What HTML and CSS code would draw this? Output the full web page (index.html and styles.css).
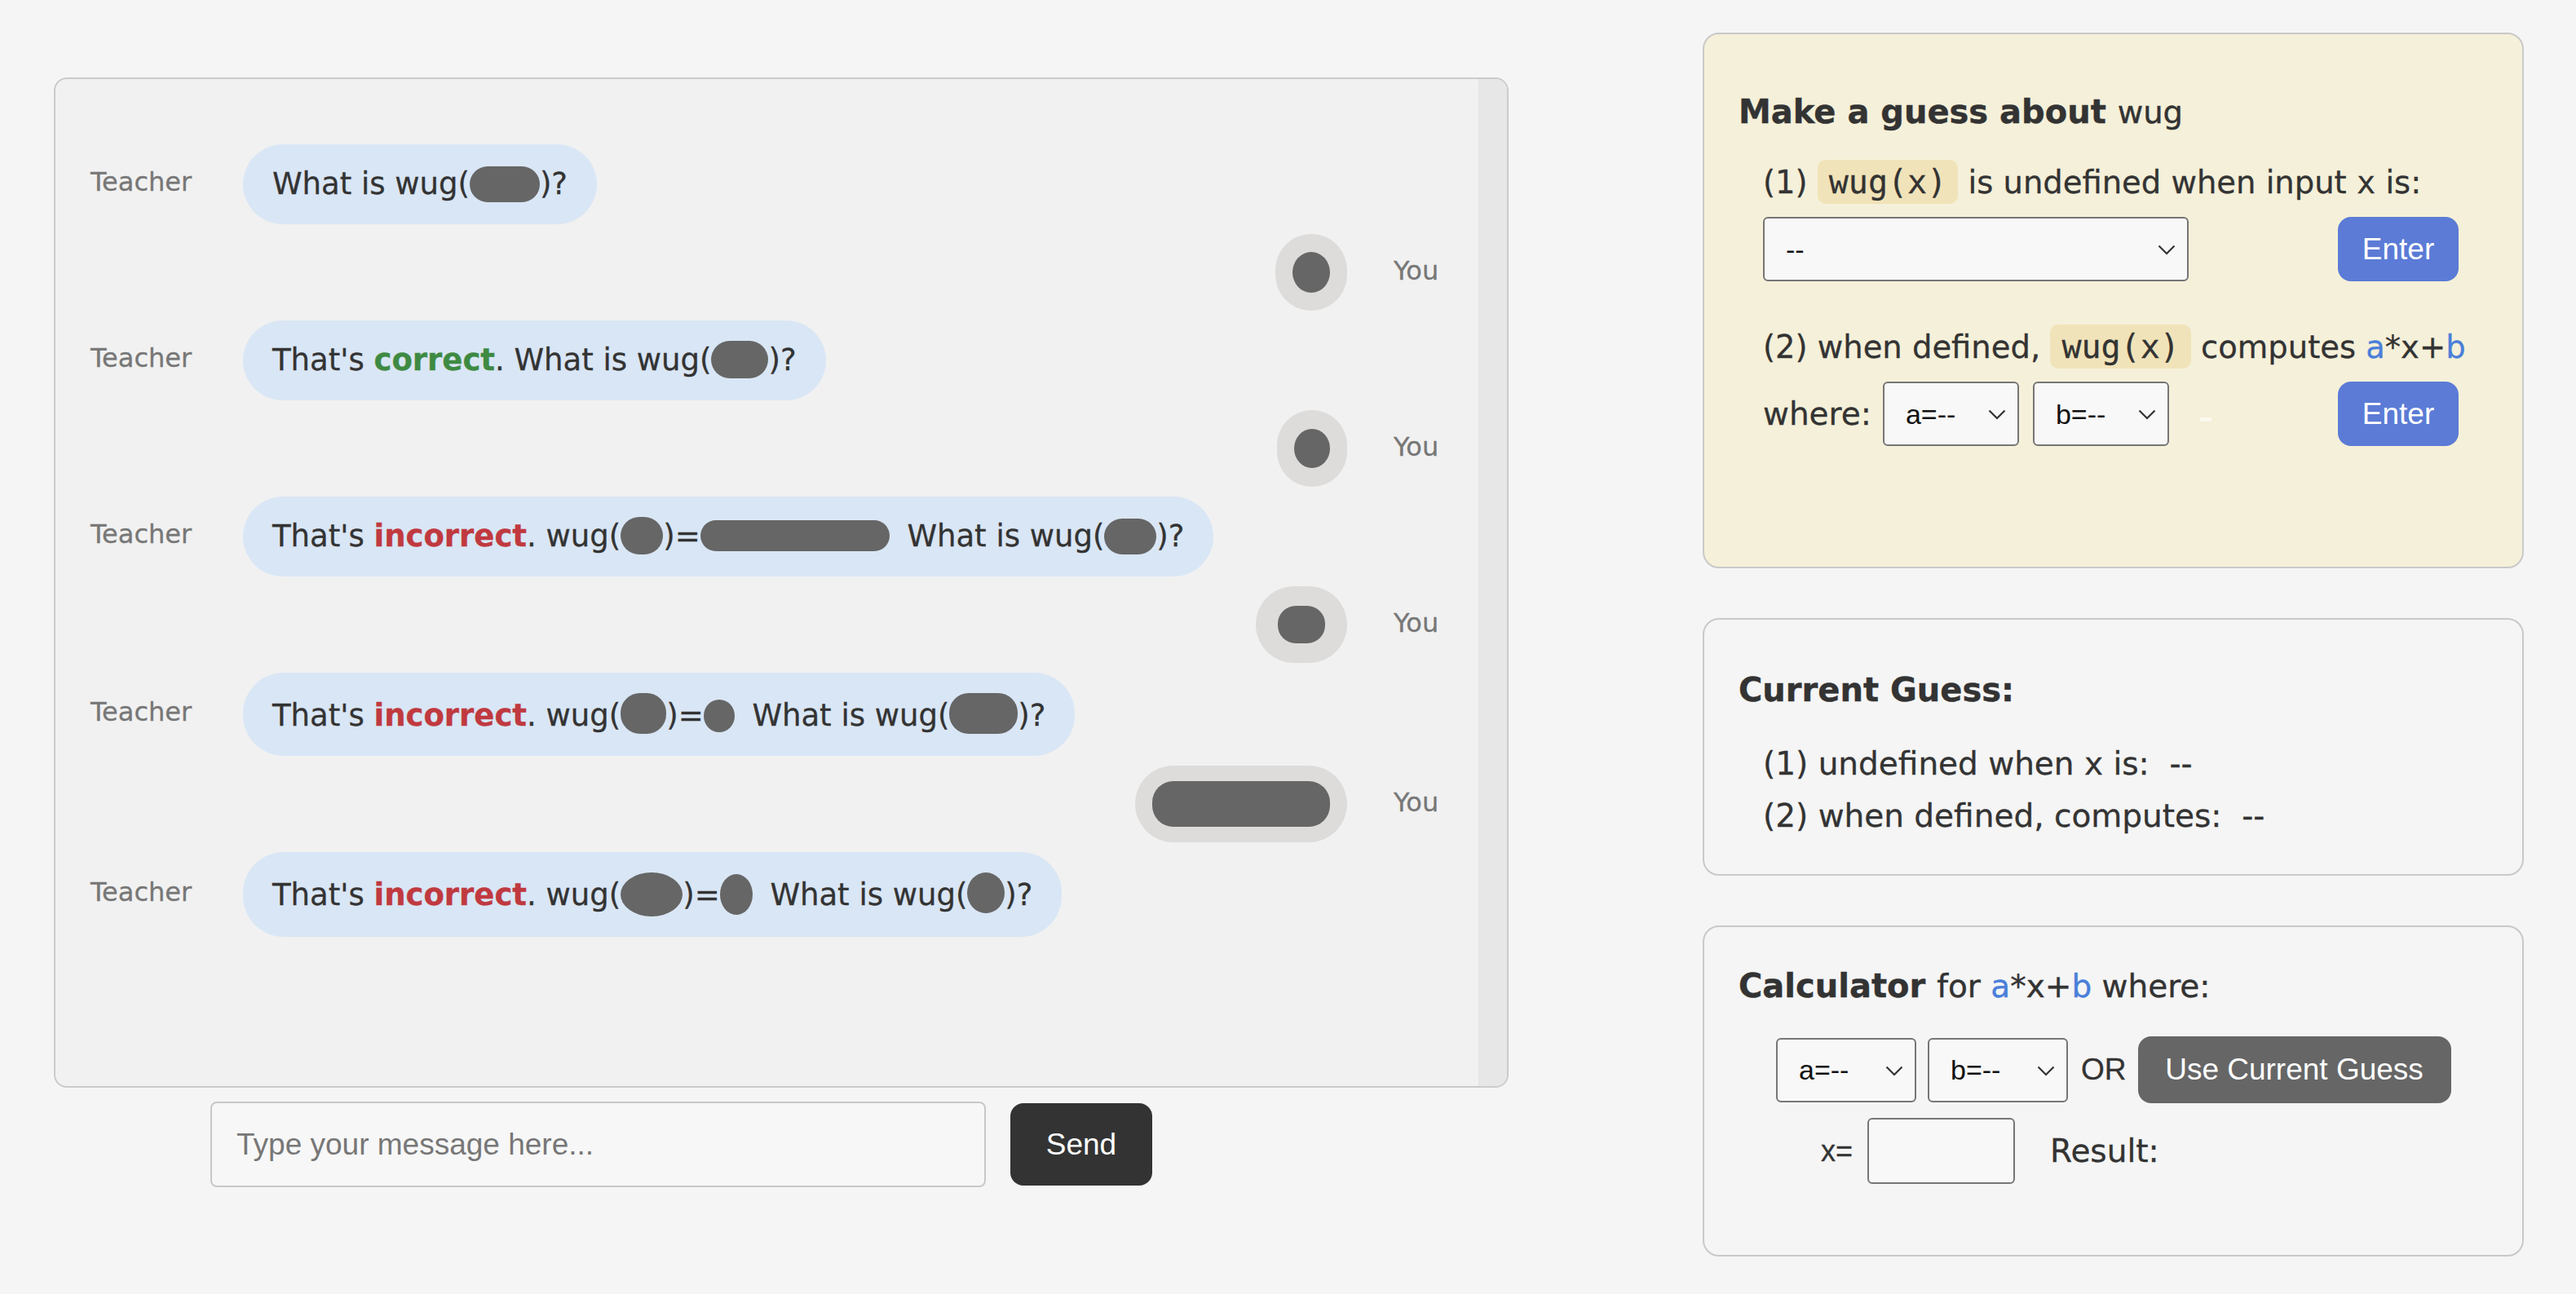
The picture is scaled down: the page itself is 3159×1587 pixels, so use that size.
FILE: index.html
```html
<!DOCTYPE html>
<html>
<head>
<meta charset="utf-8">
<title>wug</title>
<link rel="stylesheet" href="styles.css">
</head>
<body>
<div class="app">
  <div class="chat-col">
    <div class="chat-box">
      <div class="messages">
        <div class="row teacher">
          <div class="who">Teacher</div>
          <div class="bubble">What is wug(<span class="blob w86"></span>)?</div>
        </div>
        <div class="row you">
          <div class="bubble"><span class="blob y46"></span></div>
          <div class="who">You</div>
        </div>
        <div class="row teacher">
          <div class="who">Teacher</div>
          <div class="bubble">That's <b class="ok">correct</b>. What is wug(<span class="blob w70"></span>)?</div>
        </div>
        <div class="row you">
          <div class="bubble"><span class="blob y44"></span></div>
          <div class="who">You</div>
        </div>
        <div class="row teacher">
          <div class="who">Teacher</div>
          <div class="bubble">That's <b class="bad">incorrect</b>. wug(<span class="blob w52"></span>)=<span class="blob w232 val"></span> What is wug(<span class="blob w64"></span>)?</div>
        </div>
        <div class="row you">
          <div class="bubble"><span class="blob y58"></span></div>
          <div class="who">You</div>
        </div>
        <div class="row teacher">
          <div class="who">Teacher</div>
          <div class="bubble">That's <b class="bad">incorrect</b>. wug(<span class="blob w56"></span>)=<span class="blob w38 val"></span> What is wug(<span class="blob w84"></span>)?</div>
        </div>
        <div class="row you">
          <div class="bubble"><span class="blob y218"></span></div>
          <div class="who">You</div>
        </div>
        <div class="row teacher">
          <div class="who">Teacher</div>
          <div class="bubble">That's <b class="bad">incorrect</b>. wug(<span class="blob w76"></span>)=<span class="blob w40 val"></span> What is wug(<span class="blob w46"></span>)?</div>
        </div>
      </div>
      <div class="track"></div>
    </div>
    <div class="composer">
      <input class="msg" type="text" placeholder="Type your message here...">
      <button class="send">Send</button>
    </div>
  </div>

  <div class="side">
    <div class="panel guess">
      <div class="h">Make a guess about <span class="n">wug</span></div>
      <div class="q q1">(1) <span class="code">wug(x)</span> is undefined when input <span class="mx">x</span> is:</div>
      <div class="ctrl">
        <span class="sel big"><select><option>--</option></select><svg class="chev" viewBox="0 0 22 13"><path d="M1.5 1.5 L11 11 L20.5 1.5" fill="none" stroke="#333" stroke-width="2.2"/></svg></span>
        <button class="enter">Enter</button>
      </div>
      <div class="q q2">(2) when defined, <span class="code">wug(x)</span> computes <span class="blue">a</span>*x+<span class="blue">b</span></div>
      <div class="ctrl">
        <span class="where">where:</span>
        <span class="sel small"><select><option>a=--</option></select><svg class="chev" viewBox="0 0 22 13"><path d="M1.5 1.5 L11 11 L20.5 1.5" fill="none" stroke="#333" stroke-width="2.2"/></svg></span>
        <span class="sel small"><select><option>b=--</option></select><svg class="chev" viewBox="0 0 22 13"><path d="M1.5 1.5 L11 11 L20.5 1.5" fill="none" stroke="#333" stroke-width="2.2"/></svg></span>
        <span class="dash"></span>
        <button class="enter">Enter</button>
      </div>
    </div>

    <div class="panel current">
      <div class="h">Current Guess:</div>
      <div class="cg first">(1) undefined when x is:&nbsp; --</div>
      <div class="cg">(2) when defined, computes:&nbsp; --</div>
    </div>

    <div class="panel calc">
      <div class="h">Calculator <span class="n">for <span class="blue">a</span>*x+<span class="blue">b</span> where:</span></div>
      <div class="crow1">
        <span class="sel calc-sel"><select><option>a=--</option></select><svg class="chev" viewBox="0 0 22 13"><path d="M1.5 1.5 L11 11 L20.5 1.5" fill="none" stroke="#333" stroke-width="2.2"/></svg></span>
        <span class="sel calc-sel"><select><option>b=--</option></select><svg class="chev" viewBox="0 0 22 13"><path d="M1.5 1.5 L11 11 L20.5 1.5" fill="none" stroke="#333" stroke-width="2.2"/></svg></span>
        <span class="or">OR</span>
        <button class="use">Use Current Guess</button>
      </div>
      <div class="crow2">
        <span class="xeq">x=</span>
        <input class="xin" type="text">
        <span class="result">Result:</span>
      </div>
    </div>
  </div>
</div>
</body>
</html>
```
FILE: styles.css
```css
* { box-sizing: border-box; }
html, body { margin: 0; padding: 0; }
body {
  background: #f5f5f5;
  font-family: "DejaVu Sans", "Noto Sans", sans-serif;
  color: #333;
}
.app {
  display: flex;
  align-items: flex-start;
  padding: 40px 0 0 66px;
}

/* ---------- chat ---------- */
.chat-col { width: 1784px; margin-top: 55px; }
.chat-box {
  height: 1239px;
  border: 2px solid #cbcbcb;
  border-radius: 16px;
  background: #f1f1f1;
  display: flex;
  overflow: hidden;
}
.messages {
  flex: 1;
  padding: 80px 0 0 43px;
  display: flex;
  flex-direction: column;
  gap: 12px;
}
.track {
  width: 35px;
  background: #e7e7e7;
  border-left: 1px solid #e2e2e2;
}
.row { display: flex; align-items: center; }
.row.you { justify-content: flex-end; }
.who {
  font-size: 32px;
  color: #777;
  line-height: 40px;
  -webkit-text-stroke: 0.3px #777;
}
.teacher .who { flex: 0 0 187px; margin-top: -6px; }
.you .who { flex: 0 0 161px; padding-left: 57px; margin-top: -4px; }
.bubble {
  font-size: 37px;
  line-height: 48px;
  padding: 25px 36px;
  border-radius: 50px;
  background: #d9e6f5;
  white-space: nowrap;
  -webkit-text-stroke: 0.3px currentColor;
}
.you .bubble {
  background: #dddcdb;
  padding: 23px 21px;
  display: flex;
  align-items: center;
  height: 94px;
}
.ok { color: #3e8a42; }
.bad { color: #c0393f; }
.blob {
  display: inline-block;
  background: #666;
  border-radius: 24px;
  height: 44px;
  vertical-align: -10px;
}
.val { margin-right: 10px; }
.w86 { width: 86px; }
.w70 { width: 70px; height: 46px; }
.w64 { width: 64px; }
.w52 { width: 52px; height: 46px; }
.w232 { width: 232px; height: 38px; border-radius: 20px; vertical-align: -6px; }
.w56 { width: 56px; height: 50px; }
.w38 { width: 38px; height: 40px; border-radius: 50%; vertical-align: -8px; }
.w84 { width: 84px; height: 50px; }
.w76 { width: 76px; height: 54px; border-radius: 50%; vertical-align: -14px; }
.w40 { width: 40px; height: 50px; border-radius: 50%; vertical-align: -12px; }
.w46 { width: 46px; height: 50px; border-radius: 50%; }
.y46 { width: 46px; height: 50px; border-radius: 50%; }
.y44 { width: 44px; height: 48px; border-radius: 50%; }
.y58 { width: 58px; height: 46px; border-radius: 22px; margin: 0 6px; }
.y218 { width: 218px; height: 56px; border-radius: 26px; }

.composer {
  display: flex;
  align-items: center;
  gap: 30px;
  margin: 17px 0 0 192px;
}
.msg {
  width: 951px;
  height: 105px;
  border: 2px solid #c8c8c8;
  border-radius: 8px;
  background: #f7f7f7;
  font-family: "Liberation Sans", Arial, sans-serif;
  font-size: 37px;
  padding: 0 30px;
  color: #333;
}
.msg::placeholder { color: #777; }
.send {
  width: 174px;
  height: 101px;
  background: #333;
  color: #fff;
  border: 0;
  border-radius: 16px;
  font-family: "Liberation Sans", Arial, sans-serif;
  font-size: 37px;
}

/* ---------- side ---------- */
.side {
  margin-left: 238px;
  width: 1007px;
  display: flex;
  flex-direction: column;
  gap: 61px;
}
.panel {
  border: 2px solid #c9c9c9;
  border-radius: 20px;
  background: #f5f5f5;
  padding: 0 40px 0 42px;
}
.guess { background: #f5f0d9; height: 657px; }
.current { height: 316px; }
.calc { height: 406px; }
.h {
  font-size: 40px;
  font-weight: bold;
  line-height: 48px;
  white-space: nowrap;
  -webkit-text-stroke: 0.4px currentColor;
}
.h .n { font-weight: normal; font-size: 38.5px; }
.guess .h { margin-top: 71px; }
.q {
  font-size: 38.5px;
  line-height: 48px;
  padding-left: 30px;
  white-space: nowrap;
  -webkit-text-stroke: 0.3px currentColor;
}
.q1 { margin-top: 37px; }
.q2 { margin-top: 56px; }
.code {
  font-family: "DejaVu Sans Mono", monospace;
  font-size: 40px;
  background: #f1e3b9;
  border-radius: 10px;
  padding: 4px 14px;
}
.mx { font-family: "DejaVu Sans Mono", monospace; }
.blue { color: #4a7fd9; }
.ctrl {
  display: flex;
  align-items: center;
  margin-top: 18px;
  padding-left: 30px;
  padding-right: 38px;
  font-size: 39px;
  -webkit-text-stroke: 0.3px currentColor;
}
.sel { position: relative; display: inline-block; -webkit-text-stroke: 0; }
.sel select {
  -webkit-appearance: none;
  appearance: none;
  border: 2px solid #767676;
  border-radius: 6px;
  background: #f8f8f8;
  font-family: "Liberation Sans", Arial, sans-serif;
  font-size: 34px;
  color: #111;
  padding: 0 0 0 26px;
  height: 79px;
  display: block;
}
.sel .chev {
  position: absolute;
  width: 22px;
  height: 13px;
  top: 34px;
  right: 16px;
  pointer-events: none;
}
.big select { width: 522px; }
.small select { width: 167px; }
.where { margin-right: 14px; }
.small + .small { margin-left: 17px; }
.dash {
  display: inline-block;
  width: 14px;
  height: 5px;
  background: #fbf9f0;
  margin-left: 38px;
  margin-top: 14px;
}
.enter {
  margin-left: auto;
  width: 148px;
  height: 79px;
  border: 0;
  border-radius: 16px;
  background: #5b7bd6;
  color: #fff;
  font-family: "Liberation Sans", Arial, sans-serif;
  font-size: 37px;
  -webkit-text-stroke: 0;
}

.current .h { margin-top: 62px; }
.cg {
  font-size: 39px;
  line-height: 64px;
  padding-left: 30px;
  white-space: nowrap;
  -webkit-text-stroke: 0.3px currentColor;
}
.cg.first { margin-top: 35px; }

.calc .h { margin-top: 48px; }
.calc .h .n { font-size: 39px; }
.crow1 {
  display: flex;
  align-items: center;
  margin-top: 37px;
  padding-left: 46px;
}
.calc-sel select { width: 172px; }
.calc-sel + .calc-sel { margin-left: 14px; }
.or {
  font-family: "Liberation Sans", Arial, sans-serif;
  font-size: 37px;
  margin: 0 14px 0 16px;
  -webkit-text-stroke: 0.3px currentColor;
}
.use {
  width: 384px;
  height: 82px;
  border: 0;
  border-radius: 16px;
  background: #666;
  color: #fff;
  font-family: "Liberation Sans", Arial, sans-serif;
  font-size: 37px;
}
.crow2 {
  display: flex;
  align-items: center;
  margin-top: 18px;
  padding-left: 101px;
}
.xeq {
  font-family: "Liberation Sans", Arial, sans-serif;
  font-size: 36px;
  margin-right: 18px;
  -webkit-text-stroke: 0.3px currentColor;
}
.xin {
  width: 181px;
  height: 81px;
  border: 2px solid #767676;
  border-radius: 6px;
  background: #f8f8f8;
}
.result {
  font-size: 39px;
  margin-left: 43px;
  -webkit-text-stroke: 0.3px currentColor;
}
```
